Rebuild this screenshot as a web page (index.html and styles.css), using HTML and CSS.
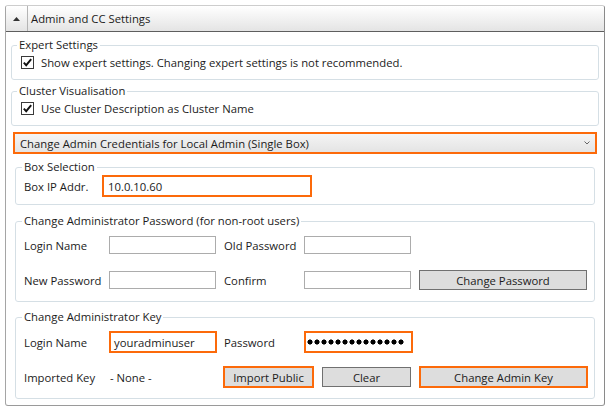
FILE: index.html
```html
<!DOCTYPE html>
<html>
<head>
<meta charset="utf-8">
<link rel="stylesheet" href="styles.css">
</head>
<body>
<div class="panel">
  <div class="header">
    <div class="toggle"><svg width="7" height="4" viewBox="0 0 7 4"><polygon points="0,4 3.5,0 7,4" fill="#333"/></svg></div>
    <div class="title">Admin and CC Settings</div>
  </div>
  <div class="content">
    <fieldset class="group">
      <legend>Expert Settings</legend>
      <div class="check"><span class="cb"><svg width="11" height="11" viewBox="0 0 11 11"><path d="M1.8 5.6 L4.2 8.2 L9.2 2.2" fill="none" stroke="#111" stroke-width="1.9"/></svg></span>Show expert settings. Changing expert settings is not recommended.</div>
    </fieldset>
    <fieldset class="group second">
      <legend>Cluster Visualisation</legend>
      <div class="check"><span class="cb"><svg width="11" height="11" viewBox="0 0 11 11"><path d="M1.8 5.6 L4.2 8.2 L9.2 2.2" fill="none" stroke="#111" stroke-width="1.9"/></svg></span>Use Cluster Description as Cluster Name</div>
    </fieldset>
    <div class="select">
      <span>Change Admin Credentials for Local Admin (Single Box)</span>
      <svg width="6" height="4" viewBox="0 0 6 4"><path d="M0.5 0.5 L3 3 L5.5 0.5" fill="none" stroke="#666" stroke-width="1"/></svg>
    </div>
    <fieldset class="sub boxsel">
      <legend>Box Selection</legend>
      <div class="row r22">
        <span class="lbl w78">Box IP Addr.</span>
        <span class="field hl w210">10.0.10.60</span>
      </div>
    </fieldset>
    <fieldset class="sub pwd">
      <legend>Change Administrator Password (for non-root users)</legend>
      <div class="row r20">
        <span class="lbl w85">Login Name</span>
        <span class="field plain w107"></span>
        <span class="lbl w80">Old Password</span>
        <span class="field plain w107"></span>
      </div>
      <div class="row r20 gap15">
        <span class="lbl w85">New Password</span>
        <span class="field plain w107"></span>
        <span class="lbl w80">Confirm</span>
        <span class="field plain w107"></span>
        <span class="btn w168">Change Password</span>
      </div>
    </fieldset>
    <fieldset class="sub key">
      <legend>Change Administrator Key</legend>
      <div class="row r22">
        <span class="lbl w85">Login Name</span>
        <span class="field hl w108 mr7">youradminuser</span>
        <span class="lbl w80">Password</span>
        <span class="field hl w109 pw"><span class="dots"></span></span>
      </div>
      <div class="row r22 gap13">
        <span class="lbl w85">Imported Key</span>
        <span class="none">- None -</span>
        <span class="btn hlb w91">Import Public</span>
        <span class="btn w89">Clear</span>
        <span class="btn hlb w169">Change Admin Key</span>
      </div>
    </fieldset>
  </div>
</div>
</body>
</html>
```
FILE: styles.css
```css
* { box-sizing: border-box; }
body {
  margin: 0;
  font-family: "Open Sans", "Noto Sans", sans-serif;
  font-size: 11.3px;
  color: #1b1b1b;
  background: #fff;
}
.panel {
  margin: 5px 0 0 5px;
  width: 600px;
  height: 401px;
  border: 1px solid;
  border-color: #cdcdcd #8a8a8a #9a9a9a #a5a5a5;
  border-radius: 3px;
  overflow: hidden;
}
.header {
  display: flex;
  height: 26px;
  border-bottom: 1px solid #5e5e5e;
  background: linear-gradient(#ffffff, #e4e4e4);
}
.toggle {
  width: 22px;
  border-right: 1px solid #b4b4b4;
  display: flex;
  align-items: center;
  justify-content: center;
}
.toggle svg { display: block; }
.title {
  padding-left: 3px;
  line-height: 25px;
}
.content { padding: 0 5px; }
fieldset {
  min-width: 0;
  border: 1px solid #d5dfe5;
  border-radius: 3px;
}
legend {
  line-height: 16px;
  padding: 0 2px;
}
.group {
  margin: 5px 0 0;
  padding: 1px 9px 8px;
}
.group legend { margin-left: -4px; }
.group.second { margin-top: 3px; }
.check {
  display: flex;
  align-items: center;
  height: 17px;
  gap: 7px;
}
.cb {
  width: 13px;
  height: 13px;
  border: 1px solid #3a3a3a;
  background: #fff;
  display: flex;
  align-items: center;
  justify-content: center;
}
.cb svg { display: block; }
.select {
  margin: 6px 2px 0;
  height: 22px;
  border: 2px solid #fc6a0a;
  background: linear-gradient(#f4f4f4, #e4e4e4);
  display: flex;
  align-items: center;
  justify-content: space-between;
  padding: 0 5px;
}
.select svg { display: block; }
.sub {
  margin: 5px 4px 0;
  padding: 0 8px 7px;
}
.sub legend { margin-left: -2px; }
.sub.pwd { margin-top: 8px; padding: 6px 8px 11px; }
.sub.key { margin-top: 7px; padding: 6px 8px 10px; }
.row {
  display: flex;
  align-items: center;
}
.r20 { height: 20px; }
.r22 { height: 22px; }
.gap15 { margin-top: 15px; }
.gap13 { margin-top: 13px; }
.lbl { flex: none; white-space: nowrap; }
.w78 { width: 78px; }
.w80 { width: 80px; }
.w85 { width: 85px; }
.field {
  flex: none;
  display: flex;
  align-items: center;
  white-space: nowrap;
}
.plain {
  height: 18px;
  border: 1px solid #acacac;
  background: #fff;
  margin-right: 8px;
}
.hl {
  height: 22px;
  border: 2px solid #fc6a0a;
  background: #fff;
  padding-left: 4px;
}
.w107 { width: 107px; }
.w108 { width: 108px; padding-left: 3px; }
.w109 { width: 109px; }
.w210 { width: 210px; }
.mr7 { margin-right: 7px; }
.pw { padding-left: 1px; }
.dots {
  display: block;
  width: 98px;
  height: 6px;
  background: radial-gradient(circle at 3px 3px, #000 2.2px, transparent 2.9px) 0 0 / 7px 6px repeat-x;
}
.none {
  flex: none;
  width: 114px;
  padding-left: 1px;
}
.btn {
  flex: none;
  height: 20px;
  border: 1px solid #707070;
  background: #dddddd;
  display: flex;
  align-items: center;
  justify-content: center;
  white-space: nowrap;
}
.hlb {
  height: 22px;
  border: 2px solid #fc6a0a;
}
.w168 { width: 168px; }
.w91 { width: 91px; margin-right: 8px; }
.w89 { width: 89px; margin-right: 8px; }
.w169 { width: 169px; }
```
